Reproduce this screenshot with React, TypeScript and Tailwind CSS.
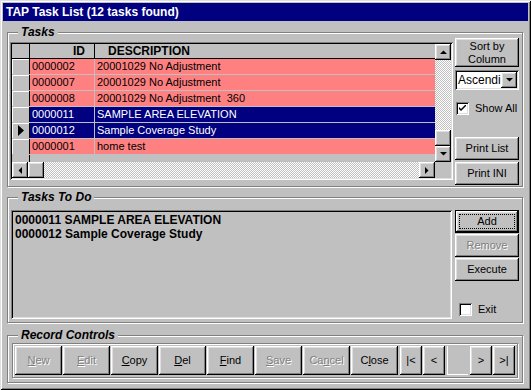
import type { ReactNode } from "react";

const raised =
  "shadow-[inset_-1px_-1px_#000,inset_1px_1px_#fff,inset_-2px_-2px_#808080,inset_2px_2px_#dfdfdf]";
const sunken =
  "shadow-[inset_1px_1px_#808080,inset_-1px_-1px_#fff,inset_2px_2px_#000,inset_-2px_-2px_#dfdfdf]";
const etched = "border border-[#808080] shadow-[inset_1px_1px_#fff,1px_1px_#fff]";
const dither = "bg-[repeating-conic-gradient(#c0c0c0_0_25%,#fff_0_50%)] bg-[length:2px_2px]";
const disabledText = "text-[#808080] [text-shadow:1px_1px_#fff]";

const rows = [
  { id: "0000002", desc: "20001029 No Adjustment", sel: false },
  { id: "0000007", desc: "20001029 No Adjustment", sel: false },
  { id: "0000008", desc: "20001029 No Adjustment  360", sel: false },
  { id: "0000011", desc: "SAMPLE AREA ELEVATION", sel: true },
  { id: "0000012", desc: "Sample Coverage Study", sel: true, current: true },
  { id: "0000001", desc: "home test", sel: false }
];

function Arrow({ dir }: { dir: "up" | "down" | "left" | "right" }) {
  const pts = {
    up: "0,4 7,4 3.5,0.5",
    down: "0,0 7,0 3.5,3.5",
    left: "4,0 4,7 0.5,3.5",
    right: "0,0 0,7 3.5,3.5"
  }[dir];
  const vertical = dir === "up" || dir === "down";
  return (
    <svg width={vertical ? 7 : 4} height={vertical ? 4 : 7} viewBox={vertical ? "0 0 7 4" : "0 0 4 7"}>
      <polygon points={pts} fill="#000" />
    </svg>
  );
}

function ScrollBtn({ dir }: { dir: "up" | "down" | "left" | "right" }) {
  return (
    <div className={`flex h-4 w-4 shrink-0 items-center justify-center bg-[#c0c0c0] ${raised}`}>
      <Arrow dir={dir} />
    </div>
  );
}

function Btn({
  children,
  className = "",
  disabled,
  isDefault
}: {
  children: ReactNode;
  className?: string;
  disabled?: boolean;
  isDefault?: boolean;
}) {
  return (
    <div
      className={`relative flex shrink-0 items-center justify-center bg-[#c0c0c0] text-center text-[11px] leading-[13px] ${
        isDefault ? "border border-black" : ""
      } ${raised} ${disabled ? disabledText : "text-black"} ${className}`}
    >
      {isDefault && <span className="absolute inset-[3px] border border-dotted border-black" />}
      <span className="relative">{children}</span>
    </div>
  );
}

function CheckBox({ checked, label, className = "" }: { checked?: boolean; label: string; className?: string }) {
  return (
    <div className={`flex items-center gap-[6px] text-[11px] ${className}`}>
      <span className={`flex h-[13px] w-[13px] items-center justify-center bg-white ${sunken}`}>
        {checked && (
          <svg width="7" height="7" viewBox="0 0 7 7">
            <path d="M0 2 L0 4 L2 6 L7 1 L7 -1 L2 4 Z" fill="#000" />
          </svg>
        )}
      </span>
      <span>{label}</span>
    </div>
  );
}

function Group({ title, className = "", children }: { title: string; className?: string; children: ReactNode }) {
  return (
    <div className={`relative w-[516px] ${etched} ${className}`}>
      <span className="absolute left-[10px] top-[-8px] bg-[#c0c0c0] px-[3px] text-[12px] font-bold italic leading-[14px]">
        {title}
      </span>
      {children}
    </div>
  );
}

function TaskGrid() {
  return (
    <div className={`ml-[2px] mt-[9px] h-[138px] w-[443px] bg-[#c0c0c0] p-[2px] ${sunken}`}>
      <div className="grid h-full grid-cols-[1fr_16px] grid-rows-[1fr_16px]">
        <div className="flex flex-col overflow-hidden">
          <div className="flex h-[15px] shrink-0 border-b border-black text-[12px] font-bold leading-[14px]">
            <div className={`w-[18px] shrink-0 border-r border-black`} />
            <div className="w-[65px] shrink-0 border-r border-black pr-[9px] text-right">ID</div>
            <div className="flex-1 pl-[13px]">DESCRIPTION</div>
          </div>
          {rows.map((r) => (
            <div key={r.id} className="flex h-[16px] shrink-0 border-b border-[#c0c0c0] text-[11px] leading-[15px]">
              <div className="flex w-[18px] shrink-0 items-center justify-center border-r border-black shadow-[inset_1px_1px_#fff]">
                {r.current && (
                  <svg width="6" height="11" viewBox="0 0 6 11">
                    <polygon points="0,0 6,5.5 0,11" fill="#000" />
                  </svg>
                )}
              </div>
              <div
                className={`w-[65px] shrink-0 border-r border-[#c0c0c0] pl-[2px] ${
                  r.sel ? "bg-[#000080] text-white" : "bg-[#ff8080] text-black"
                }`}
              >
                {r.id}
              </div>
              <div
                className={`flex-1 whitespace-pre pl-[2px] ${
                  r.sel ? "bg-[#000080] text-white" : "bg-[#ff8080] text-black"
                }`}
              >
                {r.desc}
              </div>
            </div>
          ))}
          <div className="flex flex-1">
            <div className="w-[18px] shrink-0 border-r border-black" />
          </div>
        </div>
        <div className={`flex flex-col ${dither}`}>
          <ScrollBtn dir="up" />
          <div className="flex-1" />
          <div className={`h-4 w-4 bg-[#c0c0c0] ${raised}`} />
          <ScrollBtn dir="down" />
        </div>
        <div className={`flex ${dither}`}>
          <ScrollBtn dir="left" />
          <div className={`h-4 w-4 bg-[#c0c0c0] ${raised}`} />
          <div className="flex-1" />
          <ScrollBtn dir="right" />
        </div>
        <div className="bg-[#c0c0c0]" />
      </div>
    </div>
  );
}

export default function App() {
  return (
    <div className="h-[390px] w-[531px] bg-[#c0c0c0] font-['Liberation_Sans',Arial,sans-serif] text-black">
      <div className="flex h-full w-full flex-col p-[3px] shadow-[inset_1px_1px_#dfdfdf,inset_-1px_-1px_#000,inset_2px_2px_#fff,inset_-2px_-2px_#808080]">
        <div className="flex h-[18px] shrink-0 items-center bg-[#000080] pl-[3px] text-[12px] font-bold text-white">
          TAP Task List (12 tasks found)
        </div>
        <div className="flex flex-1 flex-col pl-[4px] pt-[11px]">
          <Group title="Tasks" className="h-[155px]">
            <div className="flex items-start">
              <TaskGrid />
              <div className="ml-[2px] mt-[5px] flex w-[64px] flex-col">
                <Btn className="h-[29px] w-[64px]">
                  Sort by
                  <br />
                  Column
                </Btn>
                <div className={`mt-[3px] flex h-[20px] w-[64px] items-center bg-white p-[2px] ${sunken}`}>
                  <span className="flex-1 overflow-hidden whitespace-nowrap pl-[1px] text-[12px] leading-[14px]">
                    Ascending
                  </span>
                  <ScrollBtn dir="down" />
                </div>
                <CheckBox checked label="Show All" className="ml-[1px] mt-[10px]" />
                <Btn className="mt-[20px] h-[23px] w-[64px]">Print List</Btn>
                <Btn className="mt-[2px] h-[23px] w-[64px]">Print INI</Btn>
              </div>
            </div>
          </Group>

          <Group title="Tasks To Do" className="mt-[10px] h-[126px]">
            <div className="flex items-start">
              <div
                className={`ml-[3px] mt-[12px] h-[109px] w-[441px] bg-[#c0c0c0] px-[4px] pt-[3px] text-[12px] font-bold leading-[14px] ${sunken}`}
              >
                <div>0000011 SAMPLE AREA ELEVATION</div>
                <div>0000012 Sample Coverage Study</div>
              </div>
              <div className="ml-[3px] mt-[12px] flex w-[64px] flex-col">
                <Btn isDefault className="h-[23px] w-[64px]">
                  Add
                </Btn>
                <Btn disabled className="mt-[1px] h-[23px] w-[64px]">
                  Remove
                </Btn>
                <Btn className="mt-[1px] h-[23px] w-[64px]">Execute</Btn>
                <CheckBox label="Exit" className="ml-[4px] mt-[20px]" />
              </div>
            </div>
          </Group>

          <Group title="Record Controls" className="mt-[12px] h-[48px]">
            <div className={`ml-[4px] mt-[7px] flex h-[35px] w-[506px] items-center gap-[1px] pl-[2px] ${etched}`}>
              <Btn disabled className="h-[29px] w-[47px]">
                <u>N</u>ew
              </Btn>
              <Btn disabled className="h-[29px] w-[47px]">
                <u>E</u>dit
              </Btn>
              <Btn className="h-[29px] w-[47px]">
                <u>C</u>opy
              </Btn>
              <Btn className="h-[29px] w-[47px]">
                <u>D</u>el
              </Btn>
              <Btn className="h-[29px] w-[47px]">
                <u>F</u>ind
              </Btn>
              <Btn disabled className="h-[29px] w-[47px]">
                <u>S</u>ave
              </Btn>
              <Btn disabled className="h-[29px] w-[47px]">
                Ca<u>n</u>cel
              </Btn>
              <Btn className="h-[29px] w-[47px]">
                C<u>l</u>ose
              </Btn>
              <Btn className="ml-[1px] h-[29px] w-[22px]">|&lt;</Btn>
              <Btn className="h-[29px] w-[22px]">&lt;</Btn>
              <div className="mx-[1px] h-[29px] w-[21px] border-b border-l border-white border-r-[#dfdfdf] border-t-[#dfdfdf]" />
              <Btn className="h-[29px] w-[22px]">&gt;</Btn>
              <Btn className="h-[29px] w-[22px]">&gt;|</Btn>
            </div>
          </Group>
        </div>
      </div>
    </div>
  );
}
